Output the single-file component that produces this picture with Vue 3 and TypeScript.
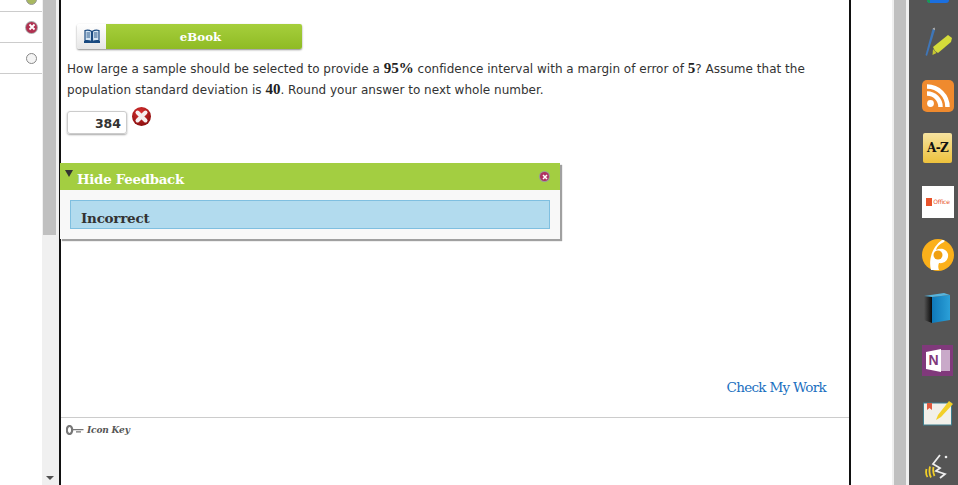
<script setup lang="ts">
const rows = [{ kind: 'ok' }, { kind: 'bad' }, { kind: 'empty' }];
</script>

<template>
  <div class="page">
    <aside class="nav">
      <div v-for="(r, i) in rows" :key="i" class="nav-row">
        <span class="dot" :class="r.kind">
          <svg v-if="r.kind === 'bad'" width="8" height="8" viewBox="0 0 8 8"><path d="M1.5 1.5l5 5M6.5 1.5l-5 5" stroke="#fff" stroke-width="1.8" /></svg>
        </span>
      </div>
    </aside>
    <div class="scroll-left">
      <div class="thumb"></div>
      <div class="track"></div>
      <div class="arrow"></div>
    </div>
    <main class="content">
      <div class="body">
        <div class="ebook">
          <span class="ebook-icon">
            <svg width="18" height="15" viewBox="0 0 18 15">
              <path d="M1 12h16v2H1z" fill="#1a4a80" />
              <path d="M2 1.500q3.500-1 6.500.8V12.500q-3-1.500-6.500-.8zM9.500 2.300q3-1.800 6.500-.8v10.200q-3.500-.7-6.500.8z" fill="#d6e6f4" stroke="#1a4a80" stroke-width="1.200" />
              <path d="M3.500 4h3.500M3.500 6h3.500M3.500 8h3.500M11 4h3.500M11 6h3.500M11 8h3.500" stroke="#1a4a80" stroke-width=".9" />
            </svg>
          </span>
          <span class="ebook-label">eBook</span>
        </div>
        <p class="question">
          How large a sample should be selected to provide a <b class="math">95%</b> confidence interval with a margin of error of <b class="math">5</b>? Assume that the population standard deviation is <b class="math">40</b>. Round your answer to next whole number.
        </p>
        <div class="answer-row">
          <div class="answer">384</div>
          <svg class="wrong" width="19" height="19" viewBox="0 0 19 19">
            <defs>
              <radialGradient id="wr" cx=".45" cy=".3" r=".8"><stop offset="0" stop-color="#dd3030" /><stop offset="1" stop-color="#7e0a0a" /></radialGradient>
            </defs>
            <circle cx="9.500" cy="9.500" r="9.500" fill="url(#wr)" />
            <path d="M5.500 5.500l8 8M13.500 5.500l-8 8" stroke="#f6eeee" stroke-width="4" stroke-linecap="round" />
          </svg>
        </div>
        <section class="feedback">
          <header class="fb-head">
            <span class="tri"></span>
            <span class="fb-title">Hide Feedback</span>
            <span class="fb-close">
              <svg width="6" height="6" viewBox="0 0 6 6"><path d="M1 1l4 4M5 1l-4 4" stroke="#fff" stroke-width="1.500" /></svg>
            </span>
          </header>
          <div class="fb-body">
            <div class="fb-box">Incorrect</div>
          </div>
        </section>
        <div class="spacer"></div>
        <div class="check-row"><a class="check">Check My Work</a></div>
      </div>
      <footer class="foot">
        <svg class="key" width="18" height="10" viewBox="0 0 18 10">
          <ellipse cx="3.500" cy="5" rx="2.700" ry="4" fill="none" stroke="#777" stroke-width="2.200" />
          <path d="M6 4h11.500v1.300H6zM10 6.300h5v1.300h-5z" fill="#777" />
        </svg>
        <span class="key-label">Icon Key</span>
      </footer>
    </main>
    <div class="gutter"></div>
    <div class="scroll-right"><div class="sr-thumb"></div></div>
    <aside class="dock">
      <div class="app-top"><span class="top-green"></span></div>
      <svg class="pen" width="28" height="30" viewBox="0 0 28 30">
        <path d="M7.500 2L10 3 2 29 .5 28z" fill="#3f76b8" />
        <path d="M7.500 2L9.500 .5 10 3z" fill="#c4c4c4" />
        <path d="M23 8l4 3-1 4-13 11-3-2-2-4z" fill="#d5dc3a" />
        <path d="M8 22l3.500 4-4 2z" fill="#c8c830" />
      </svg>
      <svg class="rss" width="32" height="32" viewBox="0 0 32 32">
        <rect width="32" height="32" rx="5" fill="#ef8a2e" />
        <circle cx="8.500" cy="23.500" r="3.400" fill="#fff" />
        <path d="M5 13.500a13.500 13.500 0 0 1 13.500 13.500M5 6.500a20.500 20.500 0 0 1 20.500 20.500" fill="none" stroke="#fff" stroke-width="4.500" />
      </svg>
      <div class="az">A-Z</div>
      <div class="office"><span class="o-mark"></span><span class="o-text">Office</span></div>
      <svg class="logo" width="32" height="32" viewBox="0 0 32 32">
        <circle cx="16" cy="16" r="16" fill="#fbb01a" />
        <path d="M9 31C6 20 11 7 20 1c3 0 3 1 2 2-4 2-7 4-8 8 4-2 10-2 12 4 1 6-4 10-9 9-1 2-1 5 0 7z" fill="#fff" />
        <circle cx="16" cy="16" r="4.500" fill="#f0a010" />
      </svg>
      <svg class="book" width="27" height="30" viewBox="0 0 27 30">
        <defs>
          <linearGradient id="bk" x1="0" x2="1" y1="0" y2="0"><stop offset="0" stop-color="#555" /><stop offset="1" stop-color="#0a0a0a" /></linearGradient>
          <linearGradient id="bl" x1="0" x2="1" y1="0" y2="0"><stop offset="0" stop-color="#0f78b8" /><stop offset="1" stop-color="#2ba0d8" /></linearGradient>
        </defs>
        <path d="M0 3h8v27l-8-3z" fill="url(#bk)" />
        <path d="M8 4l18-2v25L8 30z" fill="url(#bl)" />
        <path d="M0 3l20-3 6 2L8 4z" fill="#58b4dc" />
      </svg>
      <svg class="note-n" width="31" height="31" viewBox="0 0 31 31">
        <rect width="31" height="31" fill="#80397b" />
        <path d="M17 5h11v21H17z" fill="#c9a9c9" />
        <path d="M4 7l15-3v23L4 24z" fill="#fff" />
        <text x="6.500" y="20" class="n-text">N</text>
      </svg>
      <svg class="note" width="30" height="26" viewBox="0 0 30 26">
        <rect x=".5" y="3" width="28" height="22" fill="#f2f0ea" stroke="#3f7f8f" />
        <path d="M4 3h5v7l-2.500-2L4 10z" fill="#e05a40" />
        <path d="M15 15L26 1l4 3-12 13-5 3z" fill="#f2cf28" />
      </svg>
      <svg class="speech" width="23" height="26" viewBox="0 0 23 26">
        <path d="M15 1L8 10l7 4-4 3 9 3-5 4" fill="none" stroke="#eee" stroke-width="1.800" />
        <circle cx="21" cy="3" r="1.300" fill="#eee" />
        <path d="M1.500 15q-1.200 5 1 8M5 12.500q-1.500 7 1 11M8.500 13q-1 5 1 9" fill="none" stroke="#f2cf28" stroke-width="1.800" />
      </svg>
    </aside>
  </div>
</template>

<style>
html, body { margin: 0; background: #fff; overflow: hidden; }
</style>

<style scoped>
.page { display: flex; width: 958px; height: 485px; overflow: hidden; background: #fff; }
.nav { width: 42px; flex: none; display: flex; flex-direction: column; }
.nav-row { height: 30px; display: flex; align-items: center; justify-content: flex-end; border-bottom: 1px solid #ccc; padding-right: 5px; }
.nav-row:first-child { height: 11px; align-items: flex-end; }
.dot { width: 11px; height: 11px; border-radius: 50%; display: flex; align-items: center; justify-content: center; box-sizing: border-box; }
.dot.ok { background: #a8b860; border: 1px solid #999; margin-bottom: 6px; }
.dot.bad { background: #b03050; box-shadow: 0 0 0 1px #aaa; }
.dot.empty { background: #f4f4f4; border: 1px solid #888; }
.scroll-left { width: 17px; flex: none; background: #f0f0f0; display: flex; flex-direction: column; }
.thumb { height: 235px; width: 13px; background: #c0c0c0; margin-left: 1px; }
.track { flex: 1; }
.arrow { align-self: center; width: 0; height: 0; border: 4px solid transparent; border-top: 4px solid #505050; border-bottom: 0; margin-bottom: 5px; margin-right: 1px; }
.content { width: 788px; flex: none; border-left: 2px solid #111; border-right: 2px solid #111; display: flex; flex-direction: column; }
.body { flex: none; height: 417px; display: flex; flex-direction: column; padding: 0 23px 0 6px; box-sizing: border-box; }
.ebook { margin: 24px 0 0 10px; width: 225px; height: 25px; display: flex; border-radius: 2px; box-shadow: 0 1px 2px rgba(0, 0, 0, .45); overflow: hidden; flex: none; }
.ebook-icon { width: 29px; background: linear-gradient(#fff, #e6e6e6); display: flex; align-items: center; justify-content: center; }
.ebook-label { flex: 1; background: linear-gradient(#a6cf3c, #8fbb24); color: #fff; font: bold 11.800px/27px "DejaVu Serif", Georgia, serif; text-align: center; padding-right: 7px; }
.question { margin: 10px 0 0; width: 764px; font: 12px/21px "DejaVu Sans", Verdana, sans-serif; letter-spacing: .02px; color: #333; }
.math { font-family: "Liberation Serif", serif; font-size: 15px; line-height: 1; color: #222; }
.answer-row { display: flex; margin-top: 10px; align-items: flex-start; }
.answer { width: 60px; height: 23px; box-sizing: border-box; border: 1px solid #ccc; border-radius: 3px; box-shadow: 0 1px 2px rgba(0, 0, 0, .35); text-align: right; padding-right: 5px; font: bold 12.500px/23px "DejaVu Sans", sans-serif; color: #333; }
.wrong { margin: -4px 0 0 5px; }
.feedback { margin: 29px 0 0 -7px; width: 500px; flex: none; box-shadow: 2px 2px 1px #a0a0a0; background: #f8f8f8; position: relative; z-index: 1; }
.fb-head { height: 27px; background: #a3ce41; display: flex; align-items: flex-end; color: #fff; padding: 0 11px 0 5px; }
.tri { width: 0; height: 0; border: 4px solid transparent; border-top: 7px solid #333; border-bottom: 0; align-self: flex-start; margin-top: 7px; }
.fb-title { font: bold 13.300px/20px "DejaVu Serif", Georgia, serif; margin-left: 4px; letter-spacing: -.25px; }
.fb-close { width: 9px; height: 9px; background: #b03060; border-radius: 50%; margin-left: auto; align-self: center; display: flex; align-items: center; justify-content: center; box-shadow: 0 0 0 1px #999; }
.fb-body { padding: 10px; height: 49px; box-sizing: border-box; }
.fb-box { height: 29px; box-sizing: border-box; border: 1px solid #7fbfe0; background: #b2dbee; color: #333; font: bold 13.500px/35px "DejaVu Serif", Georgia, serif; padding-left: 10px; letter-spacing: -.25px; overflow: hidden; }
.spacer { flex: 1; }
.check-row { display: flex; justify-content: flex-end; height: 40px; }
.check { font: 13.500px/20px "DejaVu Serif", Georgia, serif; color: #1a6fc0; letter-spacing: -.7px; }
.foot { border-top: 1px solid #ccc; height: 67px; flex: none; display: flex; align-items: flex-start; padding: 6px 0 0 5px; gap: 3px; box-sizing: border-box; }
.key { margin-top: 1px; }
.key-label { font: italic bold 9px/12px "DejaVu Serif", Georgia, serif; color: #555; letter-spacing: -.15px; }
.gutter { width: 41px; flex: none; }
.scroll-right { width: 17px; flex: none; background: #f0f0f0; }
.sr-thumb { width: 12px; height: 100%; background: #c0c0c0; margin-left: 2px; }
.dock { flex: 1; background: #555; display: flex; flex-direction: column; align-items: flex-start; }
.dock > * { flex: none; display: block; }
.app-top { width: 22px; height: 3px; background: #1a6fe0; border-radius: 0 0 3px 3px; margin-left: 18px; position: relative; overflow: hidden; }
.top-green { display: block; width: 3px; height: 3px; background: #1a9a50; }
.pen { margin: 24px 0 0 16px; }
.rss { margin: 23px 0 0 13px; }
.az { margin: 21px 0 0 14px; width: 29px; height: 30px; border-radius: 2px; background: linear-gradient(#f6e3a0, #eec23c); color: #111; font: bold 12px/31px "DejaVu Serif", serif; text-align: center; letter-spacing: -.7px; }
.office { margin: 23px 0 0 13px; width: 32px; height: 32px; background: #fff; display: flex !important; align-items: center; justify-content: center; gap: 1px; }
.o-mark { width: 6px; height: 8px; background: #e8532b; }
.o-text { font: 6px/8px "DejaVu Sans", sans-serif; color: #e8532b; letter-spacing: -.2px; }
.logo { margin: 21px 0 0 13px; }
.book { margin: 22px 0 0 15px; }
.note-n { margin: 22px 0 0 13px; }
.note { margin: 24px 0 0 14px; }
.speech { margin: 28px 0 0 16px; }
.n-text { font: bold 14px "Liberation Sans", sans-serif; fill: #80397b; }
</style>
